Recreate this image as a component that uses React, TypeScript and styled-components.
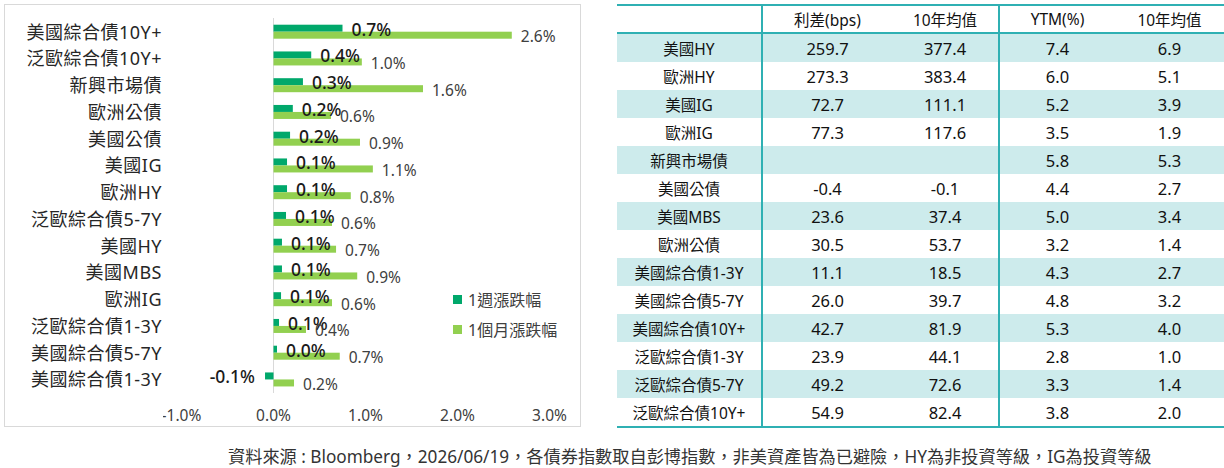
import React from 'react';
import styled, { createGlobalStyle } from 'styled-components';

const GlobalStyle = createGlobalStyle`
    html, body {
        margin: 0;
        padding: 0;
        background: #ffffff;
    }
    body {
        font-family: "Noto Sans", "Noto Sans CJK TC", sans-serif;
        color: #1a1a1a;
    }
`;

const DARK_GREEN = '#00a86b';
const LIGHT_GREEN = '#92d050';
const TEAL = '#2fb0b3';
const SHADE = '#cdebec';

// chart geometry (svg coords)
const ZERO_X = 110.5;
const SCALE = 92;
const ROW_TOP = 26.7;
const ROW_PITCH = 26.75;

const chartRows = [
    { name: '美國綜合債10Y+', week: 0.75, weekLabel: '0.7%', month: 2.59, monthLabel: '2.6%' },
    { name: '泛歐綜合債10Y+', week: 0.41, weekLabel: '0.4%', month: 0.96, monthLabel: '1.0%' },
    { name: '新興市場債', week: 0.32, weekLabel: '0.3%', month: 1.625, monthLabel: '1.6%' },
    { name: '歐洲公債', week: 0.21, weekLabel: '0.2%', month: 0.625, monthLabel: '0.6%' },
    { name: '美國公債', week: 0.18, weekLabel: '0.2%', month: 0.94, monthLabel: '0.9%' },
    { name: '美國IG', week: 0.147, weekLabel: '0.1%', month: 1.08, monthLabel: '1.1%' },
    { name: '歐洲HY', week: 0.147, weekLabel: '0.1%', month: 0.84, monthLabel: '0.8%' },
    { name: '泛歐綜合債5-7Y', week: 0.136, weekLabel: '0.1%', month: 0.636, monthLabel: '0.6%' },
    { name: '美國HY', week: 0.092, weekLabel: '0.1%', month: 0.68, monthLabel: '0.7%' },
    { name: '美國MBS', week: 0.092, weekLabel: '0.1%', month: 0.91, monthLabel: '0.9%' },
    { name: '歐洲IG', week: 0.082, weekLabel: '0.1%', month: 0.636, monthLabel: '0.6%' },
    { name: '泛歐綜合債1-3Y', week: 0.06, weekLabel: '0.1%', month: 0.353, monthLabel: '0.4%' },
    { name: '美國綜合債5-7Y', week: 0.038, weekLabel: '0.0%', month: 0.72, monthLabel: '0.7%' },
    { name: '美國綜合債1-3Y', week: -0.092, weekLabel: '-0.1%', month: 0.223, monthLabel: '0.2%' },
];

const tableRows = [
    ['美國HY', '259.7', '377.4', '7.4', '6.9'],
    ['歐洲HY', '273.3', '383.4', '6.0', '5.1'],
    ['美國IG', '72.7', '111.1', '5.2', '3.9'],
    ['歐洲IG', '77.3', '117.6', '3.5', '1.9'],
    ['新興市場債', '', '', '5.8', '5.3'],
    ['美國公債', '-0.4', '-0.1', '4.4', '2.7'],
    ['美國MBS', '23.6', '37.4', '5.0', '3.4'],
    ['歐洲公債', '30.5', '53.7', '3.2', '1.4'],
    ['美國綜合債1-3Y', '11.1', '18.5', '4.3', '2.7'],
    ['美國綜合債5-7Y', '26.0', '39.7', '4.8', '3.2'],
    ['美國綜合債10Y+', '42.7', '81.9', '5.3', '4.0'],
    ['泛歐綜合債1-3Y', '23.9', '44.1', '2.8', '1.0'],
    ['泛歐綜合債5-7Y', '49.2', '72.6', '3.3', '1.4'],
    ['泛歐綜合債10Y+', '54.9', '82.4', '3.8', '2.0'],
];

const headers = ['', '利差(bps)', '10年均值', 'YTM(%)', '10年均值'];
const colWidths = [145, 130, 107, 116, 109];
const dividers = [0, 2];

const BarChart = () => {
    const axisTicks = [-1, 0, 1, 2, 3];
    return (
        <PlotSvg width={417} height={421} viewBox="0 0 417 421">
            <line x1={ZERO_X} y1={13} x2={ZERO_X} y2={388} stroke="#d9d9d9" strokeWidth={1} />
            {chartRows.map((row, i) => {
                const cy = ROW_TOP + ROW_PITCH * i;
                const weekLen = Math.abs(row.week) * SCALE;
                const weekX = row.week >= 0 ? ZERO_X : ZERO_X - weekLen;
                const monthLen = row.month * SCALE;
                return (
                    <g key={row.name}>
                        <rect x={weekX} y={cy - 7} width={weekLen} height={7} fill={DARK_GREEN} />
                        <rect x={ZERO_X} y={cy} width={monthLen} height={7} fill={LIGHT_GREEN} />
                        <WeekText
                            x={row.week >= 0 ? ZERO_X + weekLen + 9 : weekX - 10}
                            y={cy - 3}
                            textAnchor={row.week >= 0 ? 'start' : 'end'}
                            dominantBaseline="central"
                        >
                            {row.weekLabel}
                        </WeekText>
                        <MonthText x={ZERO_X + monthLen + 9} y={cy + 4.5} dominantBaseline="central">
                            {row.monthLabel}
                        </MonthText>
                    </g>
                );
            })}
            {axisTicks.map((t) => (
                <AxisText key={t} x={ZERO_X + t * SCALE} y={410} textAnchor="middle" dominantBaseline="central">
                    {t.toFixed(1)}%
                </AxisText>
            ))}
            <rect x={290} y={290} width={9} height={9} fill={DARK_GREEN} />
            <LegendText x={305} y={294.5} dominantBaseline="central">1週漲跌幅</LegendText>
            <rect x={290} y={320} width={9} height={9} fill={LIGHT_GREEN} />
            <LegendText x={305} y={324.5} dominantBaseline="central">1個月漲跌幅</LegendText>
        </PlotSvg>
    );
};

const App = () => {
    return (
        <Page>
            <GlobalStyle />
            <TopRow>
                <ChartPanel>
                    <CategoryColumn>
                        {chartRows.map((row) => (
                            <CategoryLabel key={row.name}>{row.name}</CategoryLabel>
                        ))}
                    </CategoryColumn>
                    <BarChart />
                </ChartPanel>

                <SpreadTable>
                    <colgroup>
                        {colWidths.map((w, i) => (
                            <col key={i} style={{ width: `${w}px` }} />
                        ))}
                    </colgroup>
                    <thead>
                        <tr>
                            {headers.map((h, i) => (
                                <HeadCell key={i} $divider={dividers.includes(i)}>{h}</HeadCell>
                            ))}
                        </tr>
                    </thead>
                    <tbody>
                        {tableRows.map((row, r) => (
                            <BodyRow key={row[0]} $shaded={r % 2 === 0}>
                                {row.map((cell, c) => (
                                    <BodyCell key={c} $divider={dividers.includes(c)} $name={c === 0}>
                                        {cell}
                                    </BodyCell>
                                ))}
                            </BodyRow>
                        ))}
                    </tbody>
                </SpreadTable>
            </TopRow>

            <SourceNote>
                資料來源 : Bloomberg，2026/06/19，各債券指數取自彭博指數，非美資產皆為已避險，HY為非投資等級，IG為投資等級
            </SourceNote>
        </Page>
    );
};

const Page = styled.div`
    width: 1224px;
    height: 468px;
    overflow: hidden;
`;

const TopRow = styled.div`
    display: flex;
    flex-direction: row;
    align-items: flex-start;
    padding-top: 4px;
    padding-left: 4px;
    gap: 36px;
`;

const ChartPanel = styled.div`
    display: flex;
    flex-direction: row;
    width: 577px;
    height: 423px;
    box-sizing: border-box;
    border: 1px solid #d9d9d9;
`;

const CategoryColumn = styled.div`
    display: flex;
    flex-direction: column;
    width: 158px;
    flex-shrink: 0;
    padding-top: 13.6px;
    box-sizing: border-box;
`;

const CategoryLabel = styled.div`
    height: 26.75px;
    line-height: 26.75px;
    text-align: right;
    padding-right: 1px;
    font-size: 18px;
    letter-spacing: 0.5px;
    color: #262626;
    white-space: nowrap;
`;

const PlotSvg = styled.svg`
    display: block;
    flex-shrink: 0;
    font-family: "Noto Sans", "Noto Sans CJK TC", sans-serif;
`;

const WeekText = styled.text`
    font-size: 17.5px;
    font-weight: 500;
    fill: #1a1a1a;
`;

const MonthText = styled.text`
    font-size: 15.5px;
    fill: #404040;
`;

const AxisText = styled.text`
    font-size: 15.5px;
    fill: #404040;
`;

const LegendText = styled.text`
    font-size: 16px;
    fill: #404040;
`;

const SpreadTable = styled.table`
    border-collapse: collapse;
    table-layout: fixed;
    width: 607px;
    border-top: 2px solid ${TEAL};
    border-bottom: 2px solid ${TEAL};
    font-family: "Noto Sans", "Noto Sans CJK TC", sans-serif;
    color: #111;
`;

const HeadCell = styled.th<{ $divider?: boolean }>`
    height: 26px;
    padding: 0;
    font-size: 15.5px;
    font-weight: normal;
    text-align: center;
    border-bottom: 2px solid ${TEAL};
    border-right: ${(p) => (p.$divider ? `2px solid ${TEAL}` : 'none')};
`;

const BodyRow = styled.tr<{ $shaded?: boolean }>`
    background: ${(p) => (p.$shaded ? SHADE : '#ffffff')};
`;

const BodyCell = styled.td<{ $divider?: boolean; $name?: boolean }>`
    height: 28px;
    padding: 0;
    text-align: center;
    font-size: ${(p) => (p.$name ? '15.5px' : '16.5px')};
    white-space: nowrap;
    border-right: ${(p) => (p.$divider ? `2px solid ${TEAL}` : 'none')};
`;

const SourceNote = styled.div`
    margin-top: 17px;
    padding-left: 228px;
    font-size: 17.2px;
    line-height: 24px;
    color: #333333;
    white-space: nowrap;
`;

export default App;
